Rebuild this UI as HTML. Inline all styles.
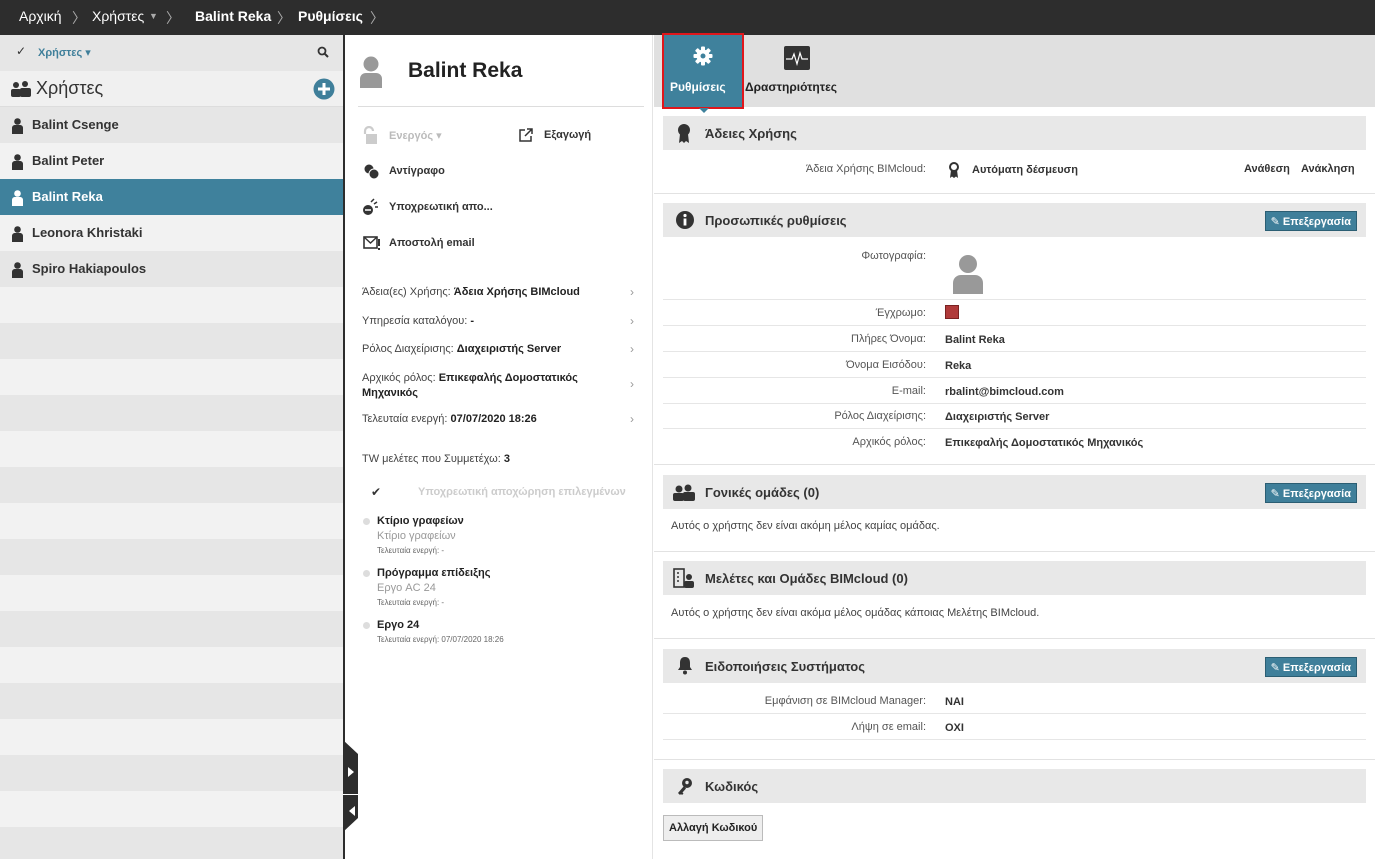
<!DOCTYPE html>
<html><head><meta charset="utf-8"><style>
*{box-sizing:border-box;margin:0;padding:0}
body{width:1375px;height:859px;overflow:hidden;font-family:"Liberation Sans","DejaVu Sans",sans-serif;font-size:12px;color:#333;background:#fff;position:relative}
.abs{position:absolute}
.top{left:0;top:0;width:1375px;height:35px;background:#2d2d2d;color:#fff;font-size:14px}
.top span{position:absolute;top:8px}
.r{position:absolute;left:0;width:343px;height:36px;font-size:13px;font-weight:bold;color:#333}
.r .t{position:absolute;left:32px;top:10px}
.r svg{position:absolute;left:12px;top:11px}
.d{background:#e6e6e6}.l{background:#f2f2f2}
.mid{left:345px;top:35px;width:308px;height:824px;background:#fff;border-right:1px solid #e4e4e4}
.right{left:654px;top:35px;width:721px;height:824px;background:#fff}
.sh{position:absolute;left:9px;width:703px;height:34px;background:#e8e8e8;font-size:13px;font-weight:bold;color:#333}
.sh .t{position:absolute;left:42px;top:10px}
.btn{position:absolute;right:9px;top:8px;height:20px;background:#3f7f9a;border:1px solid #2b5e73;color:#fff;font-size:11px;font-weight:bold;padding:3px 5px 0 5px}
.lb{position:absolute;width:272px;text-align:right;color:#555;font-size:11px}
.vl{position:absolute;left:291px;font-weight:bold;font-size:11px;color:#333}
.hr{position:absolute;left:9px;width:703px;height:1px;background:#e6e6e6}
.sep{position:absolute;left:0;width:721px;height:1px;background:#e2e2e2}
.ml{position:absolute;left:17px;font-size:11px;color:#444}
.ml b{color:#222}
.chev{position:absolute;left:285px;color:#999;font-size:12px}
</style></head><body>
<div class="abs top">
<span style="left:19px">Αρχική</span><span style="left:72px;color:#aaa">〉</span>
<span style="left:92px">Χρήστες</span><span style="left:149px;font-size:9px;top:11px;color:#aaa">▼</span><span style="left:166px;color:#aaa">〉</span>
<span style="left:195px;font-weight:bold">Balint Reka</span><span style="left:277px;color:#aaa">〉</span>
<span style="left:298px;font-weight:bold">Ρυθμίσεις</span><span style="left:370px;color:#aaa">〉</span>
</div>

<div class="abs" style="left:0;top:35px;width:343px;height:824px;background:#f2f2f2;overflow:hidden">
<div class="r d" style="top:0;font-size:11px"><span style="position:absolute;left:16px;top:9px;color:#333;font-size:12px">✓</span><span style="position:absolute;left:38px;top:11px;color:#3f7f9a">Χρήστες ▾</span>
<svg style="position:absolute;left:317px;top:11px" width="12" height="12" viewBox="0 0 12 12"><circle cx="5" cy="5" r="3.5" fill="none" stroke="#333" stroke-width="1.8"/><path d="M7.5 7.5L11 11" stroke="#333" stroke-width="2"/></svg></div>
<div class="r" style="top:36px;background:#f0f0f0;border-bottom:1px solid #ddd"><svg style="position:absolute;left:10px;top:10px" width="22" height="16" viewBox="0 0 22 16"><circle cx="6" cy="4" r="3" fill="#333"/><rect x="1" y="8" width="10" height="8" rx="2" fill="#333"/><circle cx="15" cy="3" r="3" fill="#333"/><rect x="10" y="7" width="11" height="9" rx="2" fill="#333"/></svg><span style="position:absolute;left:36px;top:7px;font-size:18px;font-weight:normal">Χρήστες</span>
<svg style="position:absolute;left:313px;top:7px" width="22" height="22" viewBox="0 0 22 22"><circle cx="11" cy="11" r="10.5" fill="#3f7f9a"/><path d="M11 5v12M5 11h12" stroke="#fff" stroke-width="3"/></svg></div>

<div class="r d" style="top:72px"><svg width="11" height="16" viewBox="0 0 11 16"><circle cx="5.5" cy="3.5" r="3.3" fill="#333"/><path d="M0 16V10c0-2 1.5-3 3-3h5c1.5 0 3 1 3 3v6z" fill="#333"/></svg><span class="t">Balint Csenge</span></div>
<div class="r l" style="top:108px"><svg width="11" height="16" viewBox="0 0 11 16"><circle cx="5.5" cy="3.5" r="3.3" fill="#333"/><path d="M0 16V10c0-2 1.5-3 3-3h5c1.5 0 3 1 3 3v6z" fill="#333"/></svg><span class="t">Balint Peter</span></div>
<div class="r" style="top:144px;background:#3f819c;color:#fff"><svg width="11" height="16" viewBox="0 0 11 16"><circle cx="5.5" cy="3.5" r="3.3" fill="#fff"/><path d="M0 16V10c0-2 1.5-3 3-3h5c1.5 0 3 1 3 3v6z" fill="#fff"/></svg><span class="t">Balint Reka</span></div>
<div class="r l" style="top:180px"><svg width="11" height="16" viewBox="0 0 11 16"><circle cx="5.5" cy="3.5" r="3.3" fill="#333"/><path d="M0 16V10c0-2 1.5-3 3-3h5c1.5 0 3 1 3 3v6z" fill="#333"/></svg><span class="t">Leonora Khristaki</span></div>
<div class="r d" style="top:216px"><svg width="11" height="16" viewBox="0 0 11 16"><circle cx="5.5" cy="3.5" r="3.3" fill="#333"/><path d="M0 16V10c0-2 1.5-3 3-3h5c1.5 0 3 1 3 3v6z" fill="#333"/></svg><span class="t">Spiro Hakiapoulos</span></div>
<div class="r d" style="top:288px"></div>
<div class="r d" style="top:360px"></div>
<div class="r d" style="top:432px"></div>
<div class="r d" style="top:504px"></div>
<div class="r d" style="top:576px"></div>
<div class="r d" style="top:648px"></div>
<div class="r d" style="top:720px"></div>
<div class="r d" style="top:792px"></div>
</div>

<div class="abs" style="left:343px;top:35px;width:2px;height:824px;background:#2d2d2d"></div>

<div class="abs mid">
<svg style="position:absolute;left:14px;top:20px" width="24" height="36" viewBox="0 0 24 36"><circle cx="12" cy="9" r="7.5" fill="#999"/><path d="M1 33v-9c0-4 3-6 6-6h10c3 0 6 2 6 6v9z" fill="#999"/></svg>
<div style="position:absolute;left:63px;top:24px;font-size:21px;font-weight:bold;color:#222">Balint Reka</div>
<div style="position:absolute;left:13px;top:71px;width:286px;height:1px;background:#ddd"></div>
<svg style="position:absolute;left:17px;top:91px" width="16" height="18" viewBox="0 0 16 18"><path d="M3 8V5a4 4 0 0 1 8 0" fill="none" stroke="#ccc" stroke-width="2.2"/><rect x="4" y="8" width="11" height="10" fill="#ccc"/></svg>
<div style="position:absolute;left:44px;top:94px;color:#bbb;font-size:11px;font-weight:bold">Ενεργός ▾</div>
<svg style="position:absolute;left:174px;top:93px" width="14" height="14" viewBox="0 0 14 14"><path d="M6 2H1v11h11V8" fill="none" stroke="#333" stroke-width="1.5"/><path d="M6 8L13 1M8 1h5v5" fill="none" stroke="#333" stroke-width="1.5"/></svg>
<div style="position:absolute;left:199px;top:94px;font-size:11px;font-weight:bold">Εξαγωγή</div>
<svg style="position:absolute;left:19px;top:129px" width="16" height="16" viewBox="0 0 16 16"><circle cx="5" cy="5" r="4.5" fill="#333"/><circle cx="10" cy="10" r="5" fill="#333" stroke="#fff" stroke-width="1"/></svg>
<div style="position:absolute;left:44px;top:130px;font-size:11px;font-weight:bold">Αντίγραφο</div>
<svg style="position:absolute;left:17px;top:163px" width="18" height="18" viewBox="0 0 18 18"><circle cx="6" cy="12" r="5" fill="#333"/><path d="M3 12h6" stroke="#fff" stroke-width="1.5"/><path d="M9 4l3-3M12 6l3-2M13 9l3 0" stroke="#333" stroke-width="1.5"/></svg>
<div style="position:absolute;left:44px;top:166px;font-size:11px;font-weight:bold">Υποχρεωτική απο...</div>
<svg style="position:absolute;left:18px;top:200px" width="18" height="16" viewBox="0 0 18 16"><rect x="1" y="2" width="13" height="11" fill="none" stroke="#333" stroke-width="1.6"/><path d="M1 2l6.5 6L14 2" fill="none" stroke="#333" stroke-width="1.4"/><path d="M16 4v7M16 13v2" stroke="#333" stroke-width="2"/></svg>
<div style="position:absolute;left:44px;top:202px;font-size:11px;font-weight:bold">Αποστολή email</div>

<div class="ml" style="top:251px">Άδεια(ες) Χρήσης: <b>Άδεια Χρήσης BIMcloud</b></div><div class="chev" style="top:250px">›</div>
<div class="ml" style="top:280px">Υπηρεσία καταλόγου: <b>-</b></div><div class="chev" style="top:279px">›</div>
<div class="ml" style="top:308px">Ρόλος Διαχείρισης: <b>Διαχειριστής Server</b></div><div class="chev" style="top:307px">›</div>
<div class="ml" style="top:336px;line-height:15px">Αρχικός ρόλος: <b>Επικεφαλής Δομοστατικός<br>Μηχανικός</b></div><div class="chev" style="top:342px">›</div>
<div class="ml" style="top:378px">Τελευταία ενεργή: <b>07/07/2020 18:26</b></div><div class="chev" style="top:377px">›</div>
<div class="ml" style="top:418px">TW μελέτες που Συμμετέχω: <b>3</b></div>
<div style="position:absolute;left:26px;top:450px;font-size:12px">✔</div>
<div style="position:absolute;left:73px;top:451px;font-size:11px;font-weight:bold;color:#ccc">Υποχρεωτική αποχώρηση επιλεγμένων</div>
<div style="position:absolute;left:18px;top:483px;width:7px;height:7px;border-radius:50%;background:#ddd"></div>
<div style="position:absolute;left:32px;top:480px;font-size:11px;font-weight:bold;color:#222">Κτίριο γραφείων</div>
<div style="position:absolute;left:32px;top:495px;font-size:11px;color:#999">Κτίριο γραφείων</div>
<div style="position:absolute;left:32px;top:511px;font-size:8px;color:#666">Τελευταία ενεργή: -</div>
<div style="position:absolute;left:18px;top:535px;width:7px;height:7px;border-radius:50%;background:#ddd"></div>
<div style="position:absolute;left:32px;top:532px;font-size:11px;font-weight:bold;color:#222">Πρόγραμμα επίδειξης</div>
<div style="position:absolute;left:32px;top:547px;font-size:11px;color:#999">Εργο AC 24</div>
<div style="position:absolute;left:32px;top:563px;font-size:8px;color:#666">Τελευταία ενεργή: -</div>
<div style="position:absolute;left:18px;top:587px;width:7px;height:7px;border-radius:50%;background:#ddd"></div>
<div style="position:absolute;left:32px;top:584px;font-size:11px;font-weight:bold;color:#222">Εργο 24</div>
<div style="position:absolute;left:32px;top:600px;font-size:8px;color:#666">Τελευταία ενεργή: 07/07/2020 18:26</div>
</div>

<svg class="abs" style="left:343px;top:740px;z-index:5" width="16" height="92" viewBox="0 0 16 92"><polygon points="0,0 15,14 15,78 0,92" fill="#2d2d2d"/><rect x="0" y="54" width="15" height="1" fill="#fff"/><polygon points="5,27 11,32 5,37" fill="#fff"/><polygon points="12,66 6,71 12,76" fill="#fff"/></svg>

<div class="abs right">
<div style="position:absolute;left:0;top:0;width:721px;height:72px;background:#e0e0e0"></div>
<div style="position:absolute;left:8px;top:-2px;width:82px;height:76px;background:#3f819c;border:2px solid #e0161b"></div>
<div style="position:absolute;left:45px;top:73px;width:0;height:0;border-left:5px solid transparent;border-right:5px solid transparent;border-top:5px solid #3f819c"></div>
<svg style="position:absolute;left:39px;top:11px" width="20" height="20" viewBox="0 0 20 20"><g fill="#fff"><circle cx="10" cy="10" r="6.5"/><rect x="8" y="0.5" width="4" height="19" rx="1"/><rect x="8" y="0.5" width="4" height="19" rx="1" transform="rotate(45 10 10)"/><rect x="8" y="0.5" width="4" height="19" rx="1" transform="rotate(90 10 10)"/><rect x="8" y="0.5" width="4" height="19" rx="1" transform="rotate(135 10 10)"/></g><circle cx="10" cy="10" r="2.5" fill="#3f819c"/></svg>
<div style="position:absolute;left:16px;top:45px;color:#fff;font-weight:bold;font-size:12px">Ρυθμίσεις</div>
<svg style="position:absolute;left:130px;top:11px" width="26" height="24" viewBox="0 0 26 24"><rect width="26" height="24" rx="2" fill="#333"/><path d="M2 13h6l2-5 3 10 3-11 2 6h6" fill="none" stroke="#fff" stroke-width="1.2"/></svg>
<div style="position:absolute;left:91px;top:45px;font-weight:bold;font-size:12px;color:#222">Δραστηριότητες</div>

<div class="sh" style="top:81px"><svg style="position:absolute;left:14px;top:8px" width="14" height="19" viewBox="0 0 14 19"><circle cx="7" cy="6" r="6" fill="#333"/><path d="M3 10l-1 9 3-2 2 2 2-2 3 2-1-9z" fill="#333"/></svg><span class="t">Άδειες Χρήσης</span></div>
<div class="lb" style="top:128px">Άδεια Χρήσης BIMcloud:</div>
<svg style="position:absolute;left:294px;top:127px" width="12" height="16" viewBox="0 0 12 16"><circle cx="6" cy="5" r="4" fill="none" stroke="#333" stroke-width="2"/><path d="M3 8l-1 8 2-1.5 2 1.5 2-1.5 2 1.5-1-8z" fill="#333"/></svg>
<div class="vl" style="top:129px;left:318px">Αυτόματη δέσμευση</div>
<div style="position:absolute;left:590px;top:128px;font-size:11px;font-weight:bold">Ανάθεση</div>
<div style="position:absolute;left:647px;top:128px;font-size:11px;font-weight:bold">Ανάκληση</div>
<div class="sep" style="top:158px"></div>

<div class="sh" style="top:168px"><svg style="position:absolute;left:13px;top:8px" width="18" height="18" viewBox="0 0 18 18"><circle cx="9" cy="9" r="9" fill="#333"/><circle cx="9" cy="4.5" r="1.6" fill="#fff"/><rect x="7.6" y="7.5" width="2.8" height="7" fill="#fff"/></svg><span class="t">Προσωπικές ρυθμίσεις</span><div class="btn">✎ Επεξεργασία</div></div>
<div class="lb" style="top:215px">Φωτογραφία:</div>
<svg style="position:absolute;left:298px;top:219px" width="32" height="40" viewBox="0 0 32 40"><circle cx="16" cy="10" r="9" fill="#999"/><path d="M1 40V29c0-5 4-8 8-8h14c4 0 8 3 8 8v11z" fill="#999"/></svg>
<div class="hr" style="top:264px"></div>
<div class="lb" style="top:272px">Έγχρωμο:</div>
<div style="position:absolute;left:291px;top:270px;width:14px;height:14px;background:#b03a3a;border:1px solid #7a2222"></div>
<div class="hr" style="top:290px"></div>
<div class="lb" style="top:298px">Πλήρες Όνομα:</div><div class="vl" style="top:299px">Balint Reka</div>
<div class="hr" style="top:316px"></div>
<div class="lb" style="top:324px">Όνομα Εισόδου:</div><div class="vl" style="top:325px">Reka</div>
<div class="hr" style="top:342px"></div>
<div class="lb" style="top:350px">E-mail:</div><div class="vl" style="top:351px">rbalint@bimcloud.com</div>
<div class="hr" style="top:368px"></div>
<div class="lb" style="top:375px">Ρόλος Διαχείρισης:</div><div class="vl" style="top:376px">Διαχειριστής Server</div>
<div class="hr" style="top:393px"></div>
<div class="lb" style="top:401px">Αρχικός ρόλος:</div><div class="vl" style="top:402px">Επικεφαλής Δομοστατικός Μηχανικός</div>
<div class="sep" style="top:429px"></div>

<div class="sh" style="top:440px"><svg style="position:absolute;left:10px;top:9px" width="22" height="17" viewBox="0 0 22 17"><circle cx="6" cy="5" r="3.5" fill="#333"/><rect x="0" y="9" width="11" height="8" rx="2" fill="#333"/><circle cx="15" cy="4" r="3.5" fill="#333"/><rect x="10" y="8" width="12" height="9" rx="2" fill="#333"/></svg><span class="t">Γονικές ομάδες (0)</span><div class="btn">✎ Επεξεργασία</div></div>
<div style="position:absolute;left:17px;top:485px;font-size:11px;color:#444">Αυτός ο χρήστης δεν είναι ακόμη μέλος καμίας ομάδας.</div>
<div class="sep" style="top:516px"></div>

<div class="sh" style="top:526px"><svg style="position:absolute;left:10px;top:7px" width="22" height="20" viewBox="0 0 22 20"><rect x="1" y="1" width="10" height="18" fill="none" stroke="#333" stroke-width="1.6"/><path d="M4 5h2M4 9h2M4 13h2" stroke="#333" stroke-width="1.5"/><circle cx="16" cy="9" r="3" fill="#333"/><rect x="11" y="13" width="10" height="7" rx="2" fill="#333"/></svg><span class="t">Μελέτες και Ομάδες BIMcloud (0)</span></div>
<div style="position:absolute;left:17px;top:572px;font-size:11px;color:#444">Αυτός ο χρήστης δεν είναι ακόμα μέλος ομάδας κάποιας Μελέτης BIMcloud.</div>
<div class="sep" style="top:603px"></div>

<div class="sh" style="top:614px"><svg style="position:absolute;left:14px;top:7px" width="16" height="19" viewBox="0 0 16 19"><path d="M8 1c-4 0-5 3-5 6v4l-2 3h14l-2-3V7c0-3-1-6-5-6z" fill="#333"/><circle cx="8" cy="16.5" r="2" fill="#333"/></svg><span class="t">Ειδοποιήσεις Συστήματος</span><div class="btn">✎ Επεξεργασία</div></div>
<div class="lb" style="top:660px">Εμφάνιση σε BIMcloud Manager:</div><div class="vl" style="top:661px">ΝΑΙ</div>
<div class="hr" style="top:678px"></div>
<div class="lb" style="top:686px">Λήψη σε email:</div><div class="vl" style="top:687px">ΟΧΙ</div>
<div class="hr" style="top:704px"></div>
<div class="sep" style="top:724px"></div>

<div class="sh" style="top:734px"><svg style="position:absolute;left:14px;top:8px" width="16" height="18" viewBox="0 0 16 18"><circle cx="10" cy="6" r="5" fill="#333"/><circle cx="10" cy="5.5" r="1.7" fill="#e8e8e8"/><path d="M7 9l-6 7 2 2 1-1 1 1 1.5-1.5-1-1 3.5-4z" fill="#333"/></svg><span class="t">Κωδικός</span></div>
<div style="position:absolute;left:9px;top:780px;height:26px;padding:6px 5px 0 5px;background:#eee;border:1px solid #bbb;font-size:11px;font-weight:bold;color:#222">Αλλαγή Κωδικού</div>
</div>
</body></html>
